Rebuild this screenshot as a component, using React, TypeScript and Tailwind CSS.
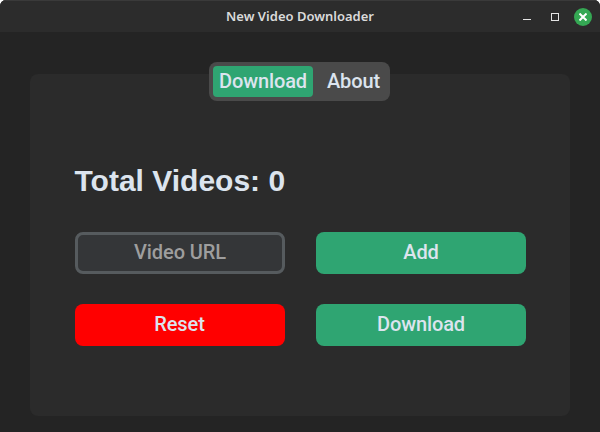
function TitleBar() {
  return (
    <header className="grid h-8 grid-cols-[1fr_auto_1fr] items-center border-t border-[#3a3a3a] bg-[#2c2c2c]">
      <span />
      <h1 className="pb-0.5 font-['Noto_Sans',sans-serif] text-[13px] leading-5 font-semibold whitespace-nowrap text-[#dadada]">
        New Video Downloader
      </h1>
      <div className="flex h-[18px] items-center justify-end pr-2">
        <button aria-label="Minimize" className="mt-[5px] mr-5 h-px w-2 bg-[#e4e4e4]" />
        <button aria-label="Maximize" className="mr-[15px] size-2 border border-[#e4e4e4]" />
        <button aria-label="Close" className="flex size-[18px] items-center justify-center rounded-full bg-[#35a854]">
          <svg viewBox="0 0 8 8" className="size-2" stroke="#fff" strokeWidth="2">
            <path d="M0.5 0.5 7.5 7.5M7.5 0.5 0.5 7.5" />
          </svg>
        </button>
      </div>
    </header>
  );
}

function Tabs() {
  return (
    <nav className="-mt-3 ml-[179px] flex h-[39px] w-[181px] rounded-lg bg-[#4a4a4a] p-1 text-[20px] font-medium tracking-[-0.1px] text-[#dce4ee]">
      <button className="h-[31px] w-[100px] rounded bg-[#2fa572] leading-[31px]">Download</button>
      <button className="h-[31px] flex-1 pl-2 leading-[31px]">About</button>
    </nav>
  );
}

function ActionButton({ label, color }: { label: string; color: string }) {
  return (
    <button className={`h-[42px] rounded-lg pb-0.5 text-[20px] font-medium tracking-[-0.1px] text-[#dce4ee] ${color}`}>
      {label}
    </button>
  );
}

export default function App() {
  return (
    <div className="h-[432px] w-[600px] bg-white">
      <div className="flex h-full flex-col overflow-hidden rounded-t-[6px] bg-[#242424] font-['Roboto',sans-serif]">
        <TitleBar />
        <main className="mx-[30px] mt-[42px] flex h-[342px] flex-col rounded-lg bg-[#2b2b2b]">
          <Tabs />
          <h2 className="mt-[60px] ml-[44.5px] h-10 font-['Liberation_Sans',sans-serif] text-[30px] leading-10 font-bold whitespace-nowrap text-[#dce4ee]">
            Total Videos: 0
          </h2>
          <div className="mt-[31px] ml-[45px] grid grid-cols-[210px_210px] gap-x-[31px] gap-y-[30px]">
            <input
              placeholder="Video URL"
              className="h-[42px] w-[210px] rounded-lg border-[3px] border-[#565b5e] bg-[#343638] pb-0.5 text-center text-[20px] font-medium tracking-[-0.1px] text-[#dce4ee] placeholder:text-[#9e9e9e]"
            />
            <ActionButton label="Add" color="bg-[#2fa572]" />
            <ActionButton label="Reset" color="bg-[#ff0000] pr-px" />
            <ActionButton label="Download" color="bg-[#2fa572]" />
          </div>
        </main>
      </div>
    </div>
  );
}
